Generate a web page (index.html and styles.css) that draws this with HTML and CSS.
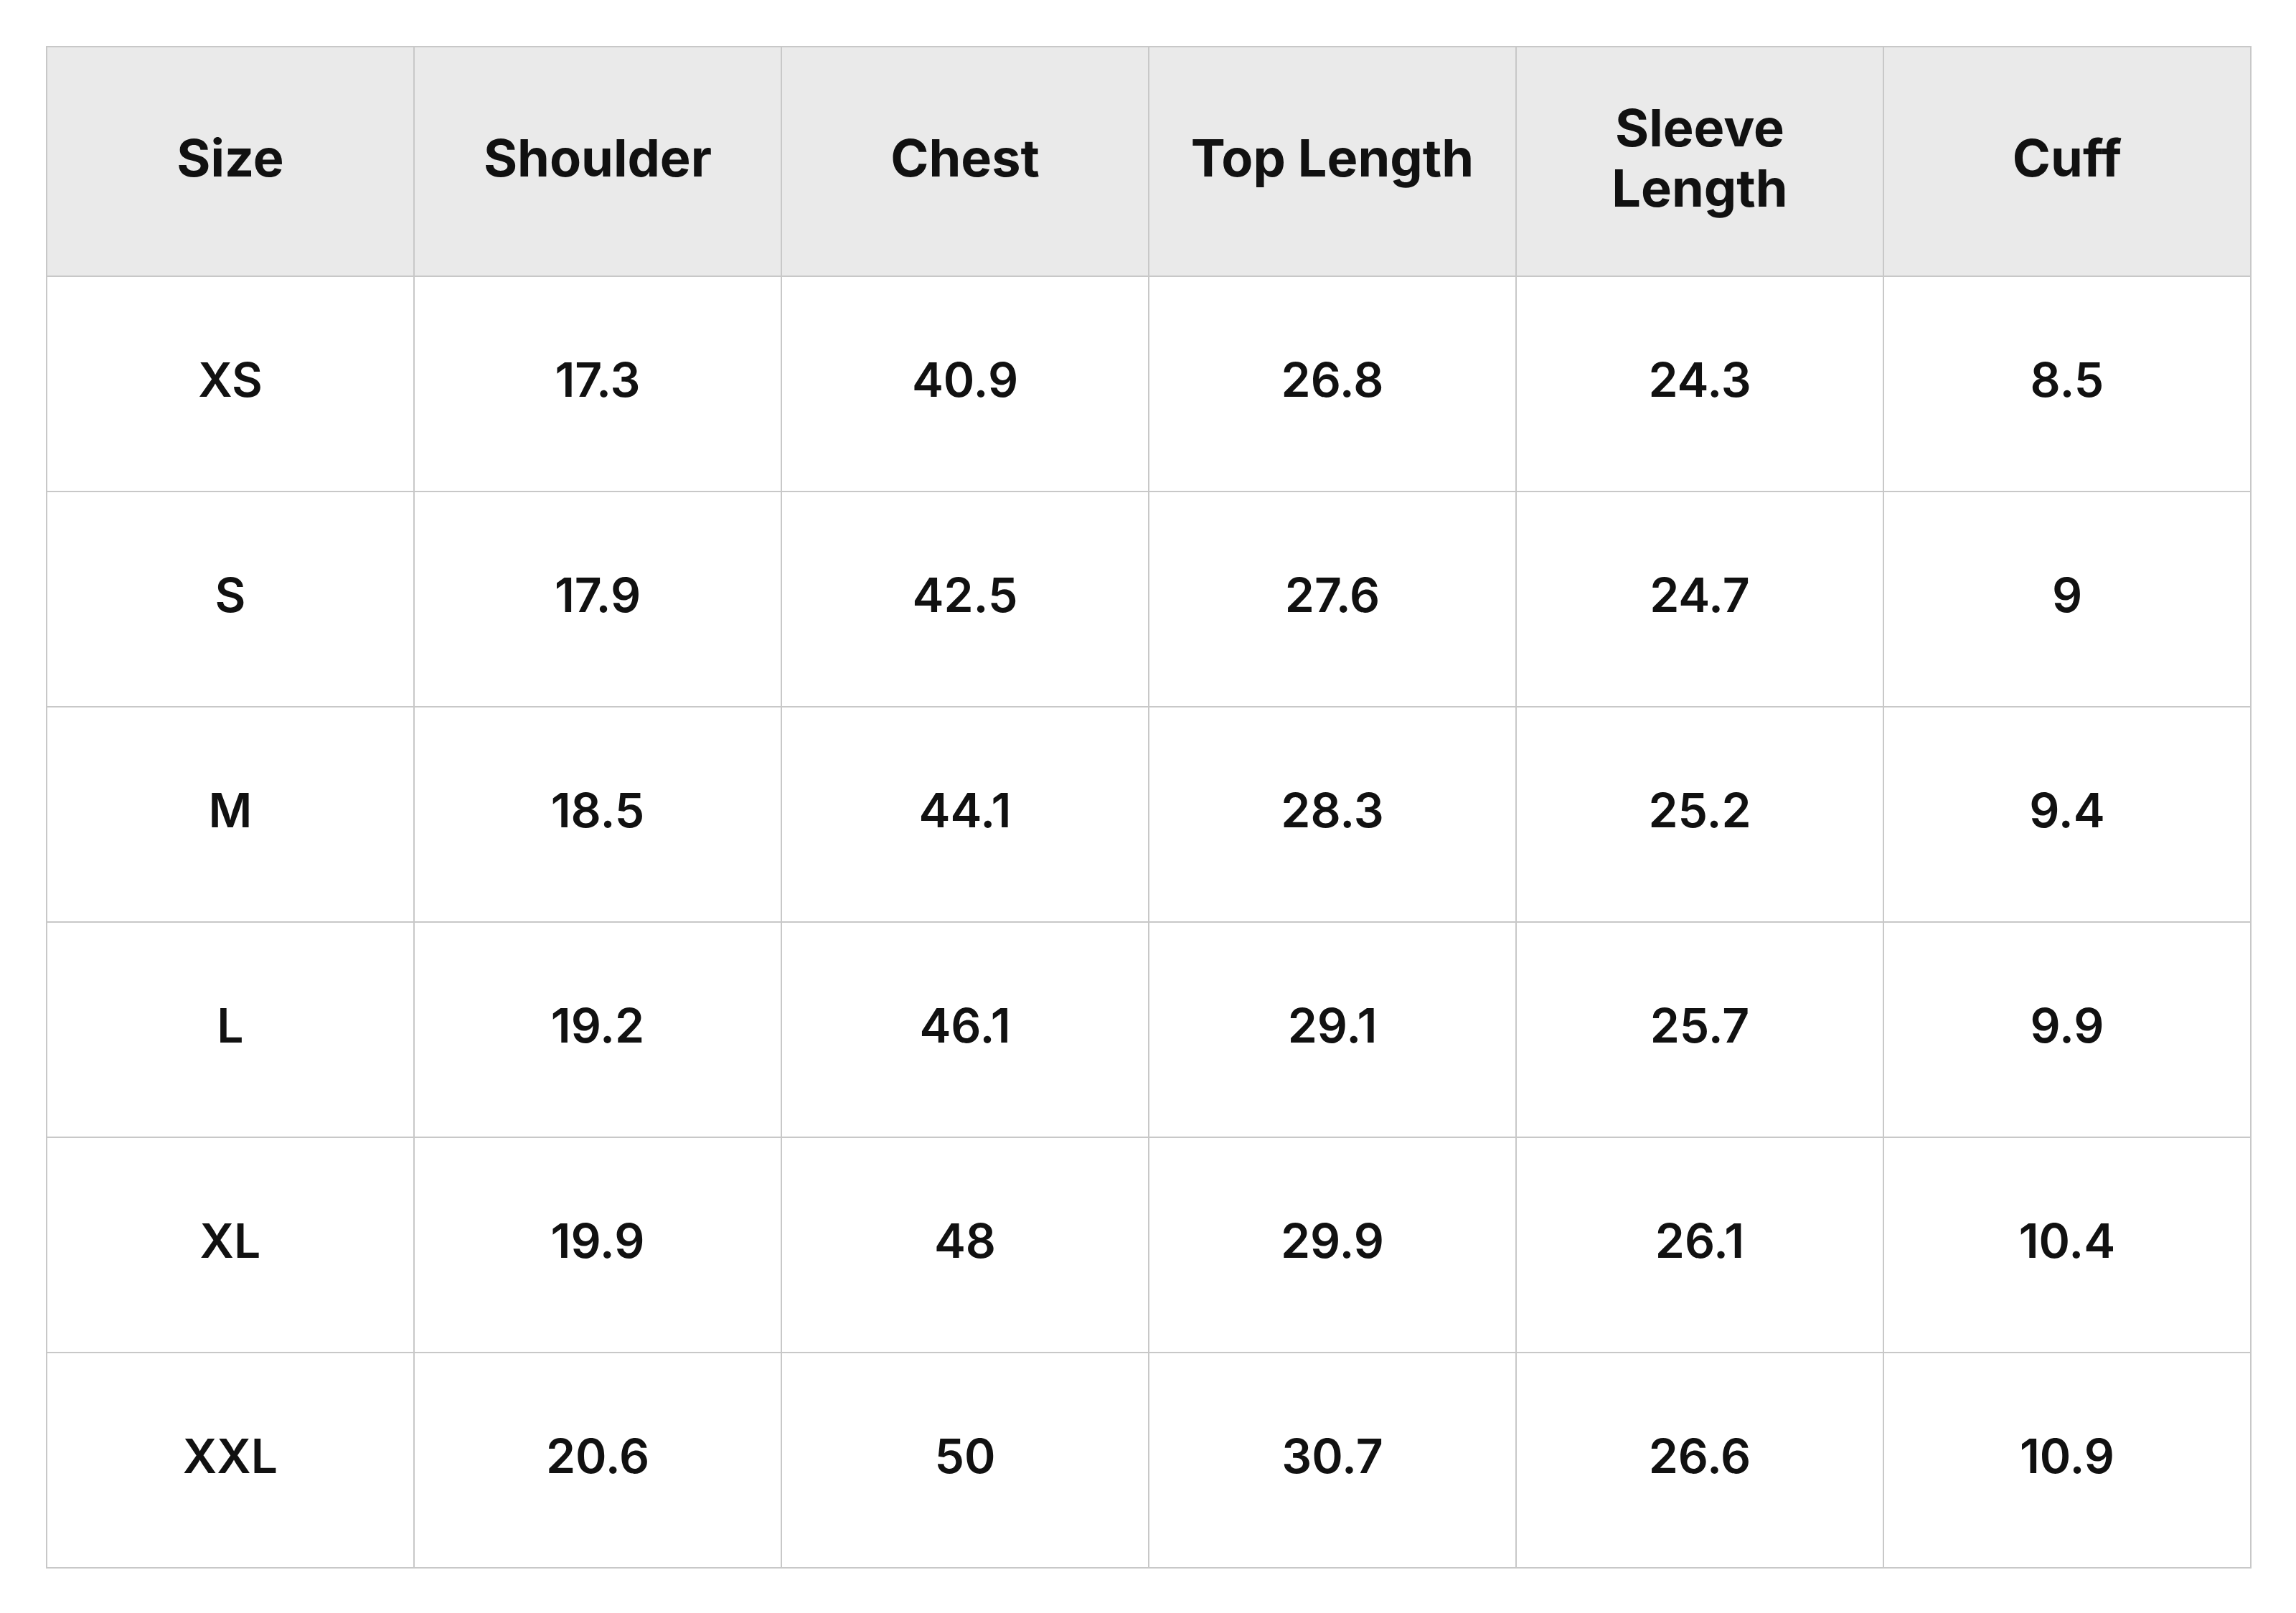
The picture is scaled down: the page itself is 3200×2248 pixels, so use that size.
FILE: index.html
```html
<!DOCTYPE html>
<html lang="en">
<head>
<meta charset="utf-8">
<title>Size Chart</title>
<link rel="stylesheet" href="styles.css">
</head>
<body>
<main class="page">
  <table class="size-chart">
    <thead>
      <tr>
        <th>Size</th>
        <th>Shoulder</th>
        <th>Chest</th>
        <th>Top Length</th>
        <th>Sleeve Length</th>
        <th>Cuff</th>
      </tr>
    </thead>
    <tbody>
      <tr><td>XS</td><td>17.3</td><td>40.9</td><td>26.8</td><td>24.3</td><td>8.5</td></tr>
      <tr><td>S</td><td>17.9</td><td>42.5</td><td>27.6</td><td>24.7</td><td>9</td></tr>
      <tr><td>M</td><td>18.5</td><td>44.1</td><td>28.3</td><td>25.2</td><td>9.4</td></tr>
      <tr><td>L</td><td>19.2</td><td>46.1</td><td>29.1</td><td>25.7</td><td>9.9</td></tr>
      <tr><td>XL</td><td>19.9</td><td>48</td><td>29.9</td><td>26.1</td><td>10.4</td></tr>
      <tr><td>XXL</td><td>20.6</td><td>50</td><td>30.7</td><td>26.6</td><td>10.9</td></tr>
    </tbody>
  </table>
</main>
</body>
</html>
```
FILE: styles.css
```css
html, body {
  margin: 0;
  padding: 0;
  background: #ffffff;
}

.page {
  padding: 64px;
}

.size-chart {
  width: 3074px;
  table-layout: fixed;
  border-collapse: collapse;
  font-family: Inter, "Noto Sans", sans-serif;
  color: #111111;
}

.size-chart th,
.size-chart td {
  border: 2px solid #c8c8c8;
  text-align: center;
  vertical-align: middle;
  padding: 0 56px;
}

.size-chart th {
  background: #eaeaea;
  height: 308px;
  padding-bottom: 10px;
  font-size: 72px;
  font-weight: 700;
  line-height: 84px;
}

.size-chart td {
  height: 286px;
  padding-bottom: 12px;
  font-size: 66px;
  font-weight: 600;
  line-height: 80px;
}
```
